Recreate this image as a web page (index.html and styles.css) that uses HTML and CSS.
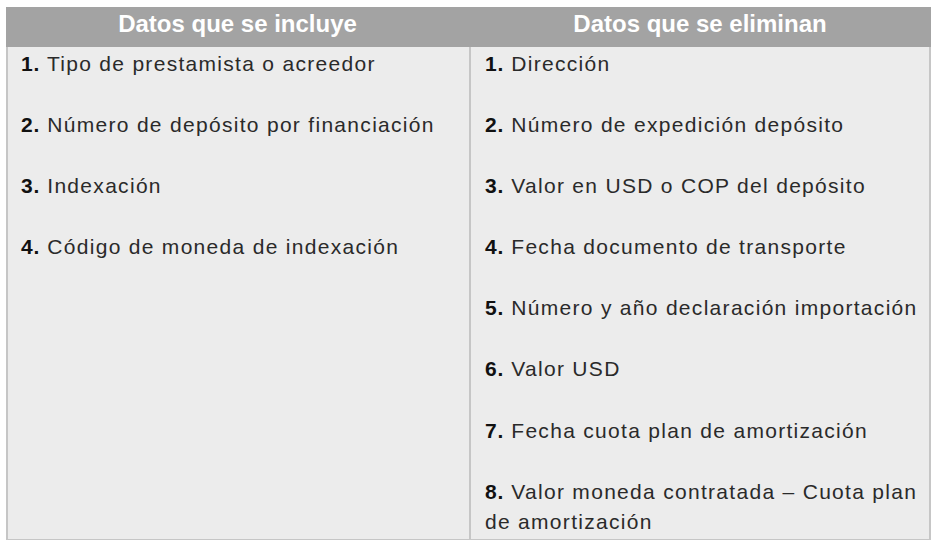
FILE: index.html
```html
<!DOCTYPE html>
<html lang="es">
<head>
<meta charset="utf-8">
<title>Datos</title>
<link rel="stylesheet" href="styles.css">
</head>
<body>
<div class="table">
  <div class="head">Datos que se incluye</div>
  <div class="head">Datos que se eliminan</div>
  <div class="cell left">
    <p class="item"><b>1.</b> Tipo de prestamista o acreedor</p>
    <p class="item"><b>2.</b> Número de depósito por financiación</p>
    <p class="item"><b>3.</b> Indexación</p>
    <p class="item"><b>4.</b> Código de moneda de indexación</p>
  </div>
  <div class="cell right">
    <p class="item"><b>1.</b> Dirección</p>
    <p class="item"><b>2.</b> Número de expedición depósito</p>
    <p class="item"><b>3.</b> Valor en USD o COP del depósito</p>
    <p class="item"><b>4.</b> Fecha documento de transporte</p>
    <p class="item"><b>5.</b> Número y año declaración importación</p>
    <p class="item"><b>6.</b> Valor USD</p>
    <p class="item"><b>7.</b> Fecha cuota plan de amortización</p>
    <p class="item last"><b>8.</b> Valor moneda contratada – Cuota plan de amortización</p>
  </div>
</div>
</body>
</html>
```
FILE: styles.css
```css
html, body {
  margin: 0;
  padding: 0;
  background: #ffffff;
}
body {
  padding: 7px 0 0 6px;
  font-family: "Liberation Sans", Arial, sans-serif;
}
.table {
  width: 925px;
  display: grid;
  grid-template-columns: 463px 462px;
}
.head {
  background: #a3a3a3;
  color: #ffffff;
  font-weight: bold;
  font-size: 24px;
  height: 40px;
  line-height: 34px;
  text-align: center;
}
.cell {
  background: #ececec;
  padding: 2px 0 0 0;
  height: 490px;
  border-bottom: 1px solid #c6c6c6;
}
.left {
  border-left: 2px solid #c6c6c6;
  padding-left: 13px;
  padding-right: 8px;
}
.right {
  border-left: 2px solid #c6c6c6;
  border-right: 2px solid #c6c6c6;
  padding-left: 14px;
  padding-right: 6px;
}
.item {
  margin: 0 0 30.6px 0;
  font-size: 21px;
  letter-spacing: 1.3px;
  line-height: 30.5px;
  color: #2a2a2a;
}
.item b {
  font-weight: 700;
  letter-spacing: 0.8px;
  color: #111111;
}
.item.last {
  margin-bottom: 0;
}
```
